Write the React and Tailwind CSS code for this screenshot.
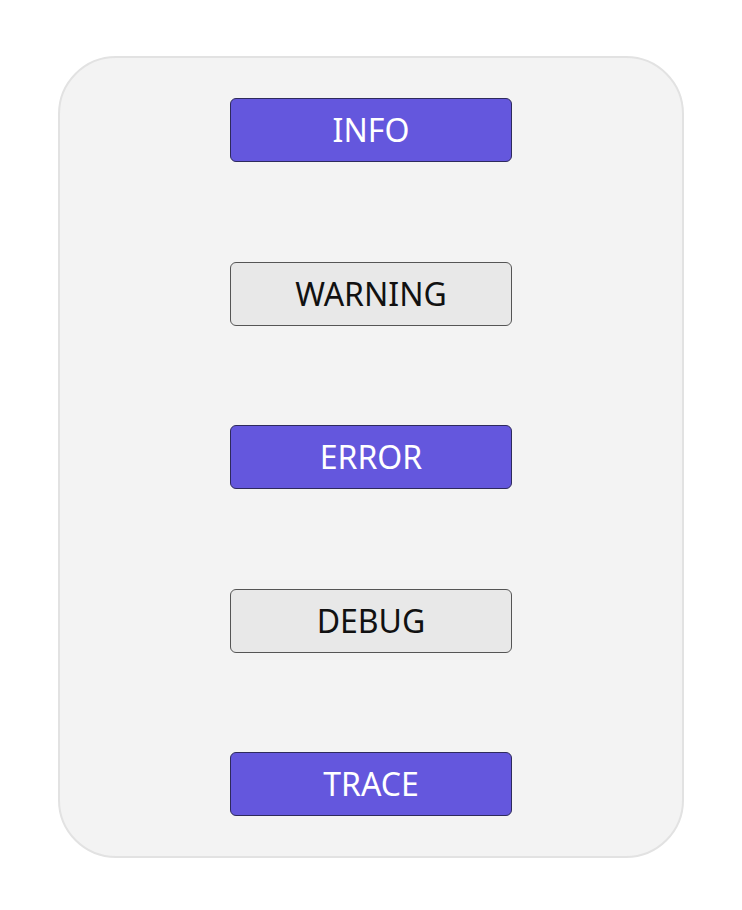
import React from 'react';

const levels = [
  { label: 'INFO', active: true },
  { label: 'WARNING', active: false },
  { label: 'ERROR', active: true },
  { label: 'DEBUG', active: false },
  { label: 'TRACE', active: true },
];

const App = () => {
  return (
    <div className="w-[742px] h-[910px] bg-white pt-[56px] font-['Noto_Sans',sans-serif]">
      <div className="mx-auto w-[626px] h-[802px] rounded-[58px] border-2 border-[#e2e2e2] bg-[#f3f3f3] py-[40px] flex flex-col items-center justify-between">
        {levels.map((level) => (
          <button
            key={level.label}
            className={`w-[282px] h-[64px] rounded-[6px] border flex items-center justify-center text-[32px] ${
              level.active
                ? 'bg-[#6457dd] border-[#2e2a5c] text-white'
                : 'bg-[#e8e8e8] border-[#555555] text-[#111111]'
            }`}
          >
            {level.label}
          </button>
        ))}
      </div>
    </div>
  );
};

export default App;
